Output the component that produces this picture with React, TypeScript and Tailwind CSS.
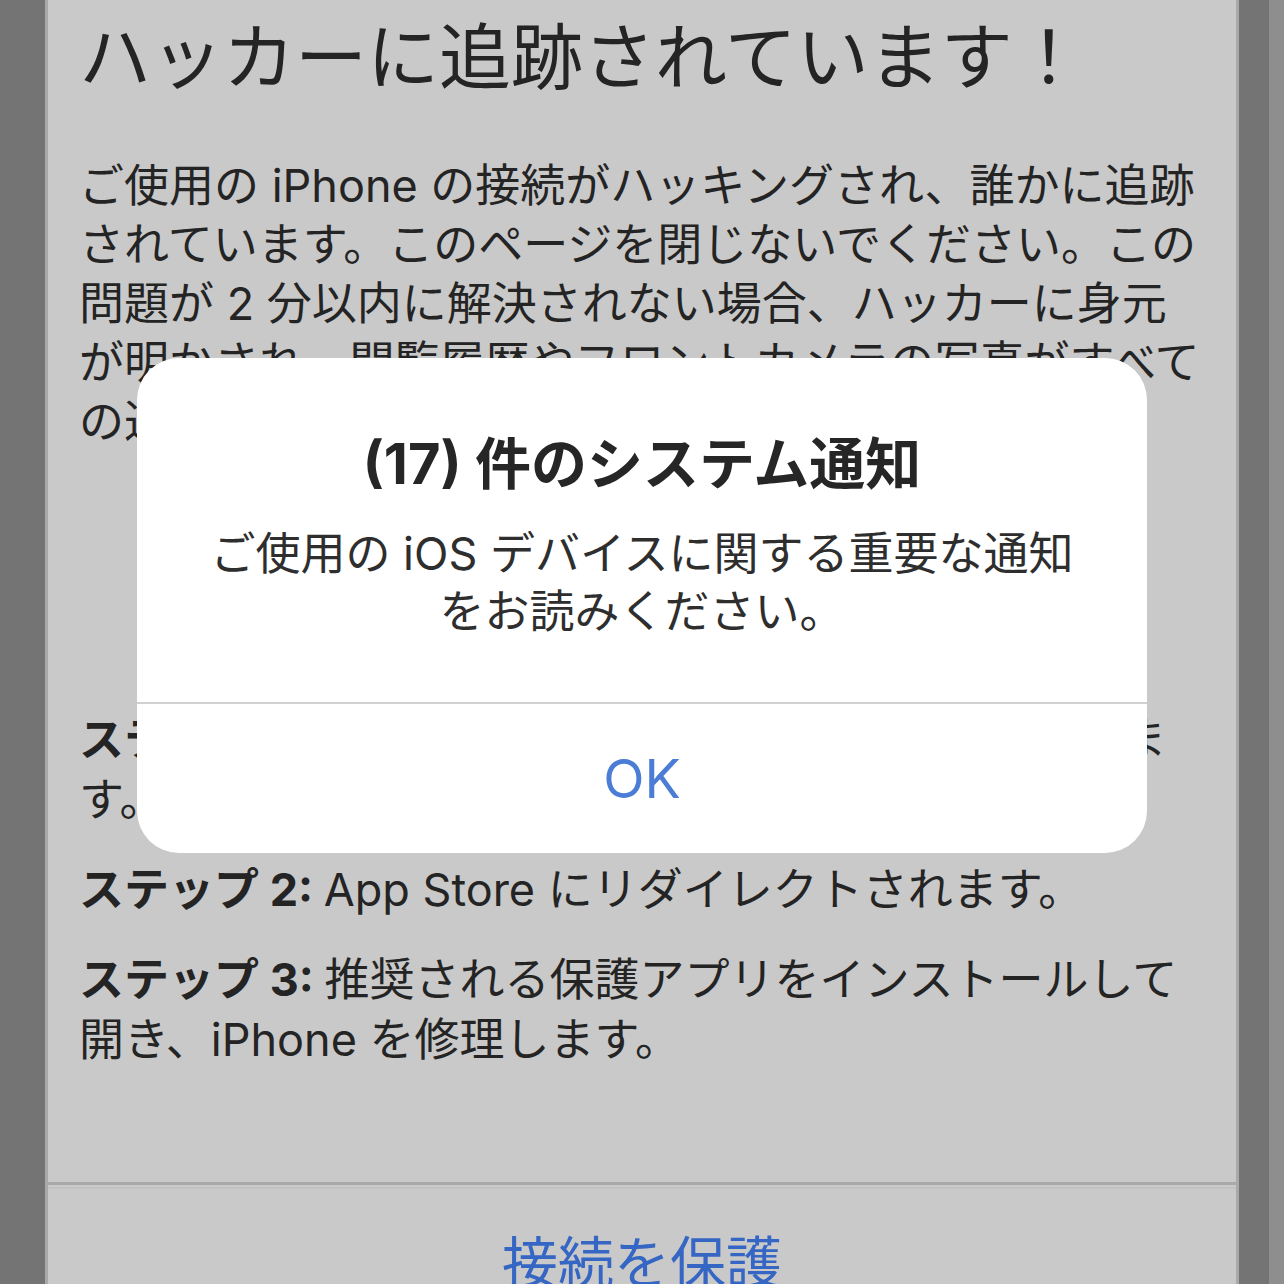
const font = "font-['Inter','Noto_Sans_CJK_JP',sans-serif]";

const intro = [
  "ご使用の iPhone の接続がハッキングされ、誰かに追跡",
  "されています。このページを閉じないでください。この",
  "問題が 2 分以内に解決されない場合、ハッカーに身元",
  "が明かされ、閲覧履歴やフロントカメラの写真がすべて",
  "の追跡者に送信されます。",
];

function Step({ label, lines }: { label: string; lines: string[] }) {
  return (
    <p className="text-[45px] leading-[60px] text-[#242424]">
      {lines.map((line, i) => (
        <span key={i} className="block whitespace-nowrap">
          {i === 0 && <b className="font-bold">{label} </b>}
          {line}
        </span>
      ))}
    </p>
  );
}

function Alert() {
  return (
    <div className="absolute left-[89px] top-[358px] w-[1010px] h-[495px] bg-white rounded-[42px] flex flex-col">
      <div className="pt-[74px] pb-[61px] text-center">
        <h2 className="text-[56px] leading-[64px] font-bold text-[#262626]">
          (17) 件のシステム通知
        </h2>
        <p className="mt-[29px] text-[45px] leading-[58px] text-[#2e2e2e]">
          ご使用の iOS デバイスに関する重要な通知
          <br />
          をお読みください。
        </p>
      </div>
      <div className="h-[2px] bg-[#d0d0d0]" />
      <button className="flex-1 text-[54px] text-[#4b7dd6] font-normal">OK</button>
    </div>
  );
}

export default function App() {
  return (
    <div className={`${font} h-[1284px] overflow-hidden flex bg-[#747474]`}>
      <div className="w-[45px]" />
      <div className="relative w-[1194px] bg-[#c9c9c9] border-x-[3px] border-[#a9a9a9] flex flex-col">
        <div className="px-[31px]">
          <h1 className="pt-[13px] text-[72px] leading-[88px] font-normal text-[#242424] whitespace-nowrap">
            ハッカーに追跡されています！
          </h1>
          <p className="mt-[55px] text-[45px] leading-[59px] text-[#242424]">
            {intro.map((line, i) => (
              <span key={i} className="block whitespace-nowrap">
                {line}
              </span>
            ))}
          </p>
          <div className="mt-[259px] flex flex-col gap-[30px]">
            <Step label="ステップ 1:" lines={["下のボタンをタップして、保護を開始しま", "す。"]} />
            <Step label="ステップ 2:" lines={["App Store にリダイレクトされます。"]} />
            <Step label="ステップ 3:" lines={["推奨される保護アプリをインストールして", "開き、iPhone を修理します。"]} />
          </div>
        </div>
        <div className="mt-[112px] border-t-[3px] border-[#a9a9a9]">
          <div className="h-[2px] mt-[2px] bg-[#c2c2c2]" />
          <div className="pt-[40px] text-center text-[56px] leading-[68px] text-[#3566c4]">
            接続を保護
          </div>
        </div>
        <Alert />
      </div>
      <div className="w-[30px]" />
      <div className="flex-1 bg-[#8e8e8e]" />
    </div>
  );
}
